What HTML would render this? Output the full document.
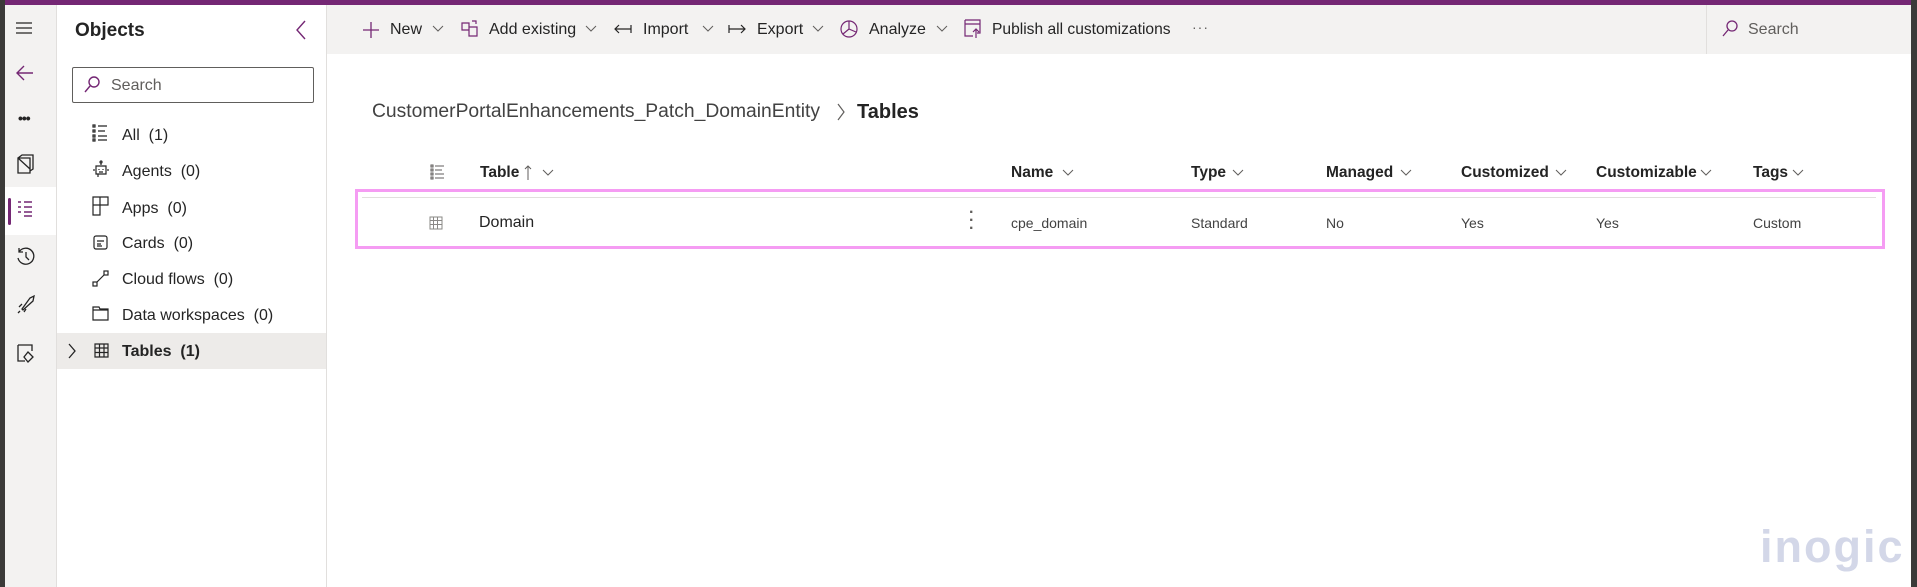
<!DOCTYPE html>
<html><head><meta charset="utf-8"><style>
*{box-sizing:border-box;margin:0;padding:0}
body{width:1917px;height:587px;overflow:hidden;background:#fff;font-family:"Segoe UI","Liberation Sans",sans-serif;color:#242424;position:relative}
.abs{position:absolute}
.t{position:absolute;white-space:nowrap}
svg{position:absolute;overflow:visible}
</style></head><body>
<div class="abs" style="left:0;top:0;width:1917px;height:5px;background:#742774"></div>
<div class="abs" style="left:0;top:0;width:5px;height:587px;background:#3b3a39"></div>
<div class="abs" style="left:1911px;top:0;width:6px;height:587px;background:#3b3a39"></div>
<!-- rail -->
<div class="abs" style="left:5px;top:5px;width:52px;height:582px;background:#f3f2f1;border-right:1px solid #e1dfdd"></div>
<div class="abs" style="left:5px;top:187px;width:51px;height:48px;background:#fff"></div>
<div class="abs" style="left:8px;top:198px;width:3px;height:27px;background:#742774;border-radius:2px"></div>
<svg style="left:15px;top:20px" width="20" height="16" fill="none" stroke="#242424" stroke-width="1.3"><path d="M1 3H17M1 8H17M1 13H17"/></svg>
<svg style="left:15px;top:64px" width="20" height="20" fill="none" stroke="#742774" stroke-width="1.4"><path d="M18 9H2M9 2L2 9L9 16"/></svg>
<div class="t" style="left:18px;top:110px;font-size:14px;font-weight:bold;letter-spacing:-1px">•••</div>
<svg style="left:17px;top:154px" width="18" height="20" fill="none" stroke="#242424" stroke-width="1.3"><path d="M1 4V19H13V4H1ZM1 4L5 1H16V15L13 17M1 4L13 15"/></svg>
<svg style="left:17px;top:200px" width="18" height="18" fill="none" stroke="#742774" stroke-width="1.4"><path d="M1 2H4M7 2H15M1 7H4M7 7H15M1 12H4M7 12H15M7 16H15"/></svg>
<svg style="left:16px;top:247px" width="20" height="20" fill="none" stroke="#242424" stroke-width="1.3"><path d="M3 5A8 8 0 1 1 2 11M3 1V5H7M10 5V10L13 13"/></svg>
<svg style="left:16px;top:295px" width="20" height="20" fill="none" stroke="#242424" stroke-width="1.3"><path d="M6 14L14 3L18 1L17 6L7 15ZM6 9L3 12M10 14L8 17M2 18L4 16"/></svg>
<svg style="left:17px;top:343px" width="18" height="20" fill="none" stroke="#242424" stroke-width="1.3"><path d="M1 2H15V8M1 2V18H8M11 9L16 14L11 19L7 14Z"/></svg>
<!-- objects panel -->
<div class="abs" style="left:57px;top:5px;width:270px;height:582px;background:#fff;border-right:1px solid #e1dfdd"></div>
<div class="t" style="left:75px;top:20px;font-size:19px;font-weight:600">Objects</div>
<svg style="left:295px;top:20px" width="12" height="20" fill="none" stroke="#742774" stroke-width="1.4"><path d="M10 1L2 10L10 19"/></svg>
<div class="abs" style="left:72px;top:67px;width:242px;height:36px;border:1px solid #605e5c;border-radius:2px"></div>
<svg style="left:84px;top:76px" width="16" height="18" fill="none" stroke="#742774" stroke-width="1.4"><circle cx="10" cy="6" r="5"/><path d="M6 10L1 16"/></svg>
<div class="t" style="left:111px;top:77px;font-size:16px;color:#605e5c">Search</div>
<div class="abs" style="left:57px;top:333px;width:269px;height:36px;background:#edebe9"></div>
<svg style="left:67px;top:343px" width="10" height="16" fill="none" stroke="#242424" stroke-width="1.3"><path d="M2 1L8 8L2 15"/></svg>
<svg style="left:92px;top:124px" width="18" height="18" fill="none" stroke="#242424" stroke-width="1.2"><path d="M1 1H3V3H1ZM1 6H3V8H1ZM1 11H3V13H1ZM1 15H3V17H1ZM6 2H15M6 7H13M6 12H15M6 16H15"/></svg>
<div class="t" style="left:122px;top:127px;font-size:16px">All&nbsp; (1)</div>
<svg style="left:93px;top:160px" width="16" height="18" fill="none" stroke="#242424" stroke-width="1.2"><circle cx="8" cy="2" r="1"/><path d="M8 3V5M3 6H13V14H3ZM1 9V11M15 9V11M6 9V10M10 9V10M6 12H10M5 14V17"/></svg>
<div class="t" style="left:122px;top:163px;font-size:16px">Agents&nbsp; (0)</div>
<svg style="left:92px;top:196px" width="18" height="20" fill="none" stroke="#242424" stroke-width="1.2"><path d="M1 1H16V9H8V19H1ZM8 1V9M1 9H8"/></svg>
<div class="t" style="left:122px;top:200px;font-size:16px">Apps&nbsp; (0)</div>
<svg style="left:93px;top:235px" width="16" height="16" fill="none" stroke="#242424" stroke-width="1.2"><rect x="1" y="1" width="13" height="13" rx="2"/><path d="M4 6H11M4 9H8M4 11H9"/></svg>
<div class="t" style="left:122px;top:235px;font-size:16px">Cards&nbsp; (0)</div>
<svg style="left:92px;top:270px" width="18" height="18" fill="none" stroke="#242424" stroke-width="1.2"><rect x="1" y="12" width="4" height="4"/><rect x="12" y="1" width="4" height="4"/><path d="M5 12L12 5"/></svg>
<div class="t" style="left:122px;top:271px;font-size:16px">Cloud flows&nbsp; (0)</div>
<svg style="left:92px;top:306px" width="18" height="16" fill="none" stroke="#242424" stroke-width="1.2"><path d="M1 1H7L8 3H16V14H1ZM1 4H16"/></svg>
<div class="t" style="left:122px;top:307px;font-size:16px">Data workspaces&nbsp; (0)</div>
<svg style="left:94px;top:343px" width="16" height="16" fill="none" stroke="#242424" stroke-width="1.2"><path d="M1 1H14V14H1ZM1 5H14M1 9.5H14M5.5 1V14M10 1V14"/></svg>
<div class="t" style="left:122px;top:343px;font-size:16px;font-weight:600">Tables&nbsp; (1)</div>
<!-- toolbar -->
<div class="abs" style="left:327px;top:5px;width:1584px;height:49px;background:#f3f2f1"></div>
<div class="abs" style="left:1706px;top:5px;width:1px;height:49px;background:#e1dfdd"></div>
<svg style="left:362px;top:21px" width="18" height="18" fill="none" stroke="#742774" stroke-width="1.3"><path d="M9 1V17M1 9H17"/></svg>
<div class="t" style="left:390px;top:21px;font-size:16px">New</div>
<svg style="left:432px;top:25px" width="12" height="8" fill="none" stroke="#605e5c"><path d="M1 1L6 6L11 1"/></svg>
<svg style="left:461px;top:20px" width="18" height="18" fill="none" stroke="#742774" stroke-width="1.2"><path d="M1 3H8V10H1ZM8 7H16V16H8V10M11 1H15V4"/></svg>
<div class="t" style="left:489px;top:21px;font-size:16px">Add existing</div>
<svg style="left:585px;top:25px" width="12" height="8" fill="none" stroke="#605e5c"><path d="M1 1L6 6L11 1"/></svg>
<svg style="left:614px;top:23px" width="18" height="12" fill="none" stroke="#242424" stroke-width="1.2"><path d="M17 6H1M5 2L1 6L5 10M17 2V10"/></svg>
<div class="t" style="left:643px;top:21px;font-size:16px">Import</div>
<svg style="left:702px;top:25px" width="12" height="8" fill="none" stroke="#605e5c"><path d="M1 1L6 6L11 1"/></svg>
<svg style="left:728px;top:23px" width="18" height="12" fill="none" stroke="#242424" stroke-width="1.2"><path d="M1 2V10M1 6H17M13 2L17 6L13 10"/></svg>
<div class="t" style="left:757px;top:21px;font-size:16px">Export</div>
<svg style="left:812px;top:25px" width="12" height="8" fill="none" stroke="#605e5c"><path d="M1 1L6 6L11 1"/></svg>
<svg style="left:840px;top:20px" width="18" height="18" fill="none" stroke="#742774" stroke-width="1.2"><circle cx="9" cy="9" r="8"/><path d="M9 1V9L16 12M9 9L3 14"/></svg>
<div class="t" style="left:869px;top:21px;font-size:16px">Analyze</div>
<svg style="left:936px;top:25px" width="12" height="8" fill="none" stroke="#605e5c"><path d="M1 1L6 6L11 1"/></svg>
<svg style="left:964px;top:19px" width="18" height="20" fill="none" stroke="#742774" stroke-width="1.2"><path d="M1 1H16V14H13M1 1V17H9M1 5H16M12 10V19M9 13L12 10L15 13"/></svg>
<div class="t" style="left:992px;top:21px;font-size:15.6px">Publish all customizations</div>
<div class="t" style="left:1192px;top:19px;font-size:14px;color:#605e5c;letter-spacing:1px">···</div>
<svg style="left:1722px;top:20px" width="16" height="18" fill="none" stroke="#742774" stroke-width="1.3"><circle cx="10" cy="6" r="5"/><path d="M6 10L1 16"/></svg>
<div class="t" style="left:1748px;top:21px;font-size:16px;color:#605e5c">Search</div>
<!-- breadcrumb -->
<div class="t" style="left:372px;top:101px;font-size:19.3px;color:#424242">CustomerPortalEnhancements_Patch_DomainEntity</div>
<svg style="left:836px;top:103px" width="10" height="18" fill="none" stroke="#605e5c" stroke-width="1.2"><path d="M2 1L8 9L2 17"/></svg>
<div class="t" style="left:857px;top:101px;font-size:20px;font-weight:600">Tables</div>
<!-- table header -->
<svg style="left:430px;top:164px" width="16" height="16" fill="none" stroke="#605e5c" stroke-width="1.1"><path d="M1 1H3V3H1ZM1 5H3V7H1ZM1 9H3V11H1ZM1 13H3V15H1ZM5 2H14M5 6H12M5 10H14M5 14H14"/></svg>
<div class="t" style="left:480px;top:164px;font-size:15.5px;font-weight:600">Table</div>
<svg style="left:524px;top:165px" width="8" height="16" fill="none" stroke="#605e5c"><path d="M4 15V1M1 4L4 1L7 4"/></svg>
<svg style="left:542px;top:169px" width="12" height="8" fill="none" stroke="#605e5c"><path d="M1 1L6 6L11 1"/></svg>
<div class="t" style="left:1011px;top:164px;font-size:15.5px;font-weight:600">Name</div>
<svg style="left:1062px;top:169px" width="12" height="8" fill="none" stroke="#605e5c"><path d="M1 1L6 6L11 1"/></svg>
<div class="t" style="left:1191px;top:164px;font-size:15.5px;font-weight:600">Type</div>
<svg style="left:1232px;top:169px" width="12" height="8" fill="none" stroke="#605e5c"><path d="M1 1L6 6L11 1"/></svg>
<div class="t" style="left:1326px;top:164px;font-size:15.5px;font-weight:600">Managed</div>
<svg style="left:1400px;top:169px" width="12" height="8" fill="none" stroke="#605e5c"><path d="M1 1L6 6L11 1"/></svg>
<div class="t" style="left:1461px;top:164px;font-size:15.5px;font-weight:600">Customized</div>
<svg style="left:1555px;top:169px" width="12" height="8" fill="none" stroke="#605e5c"><path d="M1 1L6 6L11 1"/></svg>
<div class="t" style="left:1596px;top:164px;font-size:15.5px;font-weight:600">Customizable</div>
<svg style="left:1700px;top:169px" width="12" height="8" fill="none" stroke="#605e5c"><path d="M1 1L6 6L11 1"/></svg>
<div class="t" style="left:1753px;top:164px;font-size:15.5px;font-weight:600">Tags</div>
<svg style="left:1792px;top:169px" width="12" height="8" fill="none" stroke="#605e5c"><path d="M1 1L6 6L11 1"/></svg>
<!-- row -->
<div class="abs" style="left:355px;top:189px;width:1530px;height:60px;border:3px solid #f59cf3"></div>
<div class="abs" style="left:362px;top:197px;width:1514px;height:1px;background:#e1dfdd"></div>
<svg style="left:430px;top:217px" width="12" height="12" fill="#8a8886"><path d="M0 0H12V12H0Z" fill="none" stroke="#8a8886"/><path d="M0 3H12V4H0ZM0 7H12V8H0ZM3 0H4V12H3ZM7 0H8V12H7Z"/></svg>
<div class="t" style="left:479px;top:214px;font-size:16px">Domain</div>
<div class="t" style="left:969px;top:209px;font-size:16px;color:#605e5c;line-height:8px;font-weight:bold">·<br>·<br>·</div>
<div class="t" style="left:1011px;top:215px;font-size:14px;color:#424242">cpe_domain</div>
<div class="t" style="left:1191px;top:215px;font-size:14px;color:#424242">Standard</div>
<div class="t" style="left:1326px;top:215px;font-size:14px;color:#424242">No</div>
<div class="t" style="left:1461px;top:215px;font-size:14px;color:#424242">Yes</div>
<div class="t" style="left:1596px;top:215px;font-size:14px;color:#424242">Yes</div>
<div class="t" style="left:1753px;top:215px;font-size:14px;color:#424242">Custom</div>
<!-- watermark -->
<div class="t" style="left:1760px;top:521px;font-size:45px;font-weight:bold;color:#d3d7e8;letter-spacing:2px;font-family:'Liberation Sans',sans-serif">inogic</div>
</body></html>
